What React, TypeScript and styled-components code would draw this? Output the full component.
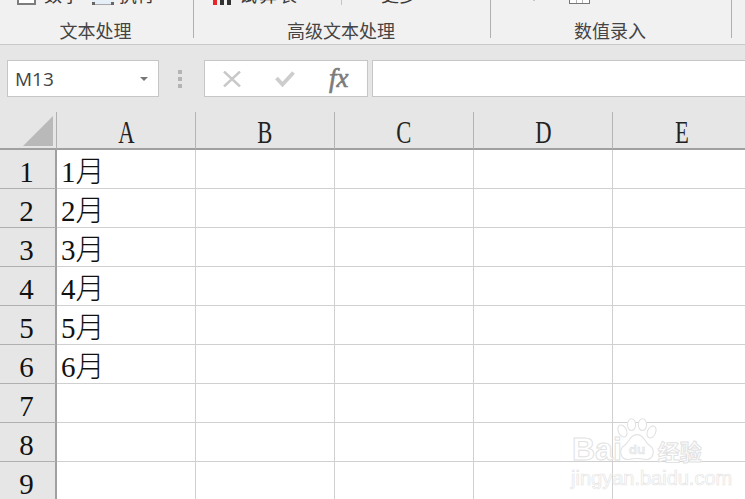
import React from 'react';
import styled, { createGlobalStyle } from 'styled-components';

const UI_FONT = `"Noto Sans CJK SC", "Noto Sans", sans-serif`;
const SHEET_FONT = `"Liberation Serif", "Noto Sans CJK SC", serif`;

const GlobalStyle = createGlobalStyle`
  html, body {
    margin: 0;
    padding: 0;
    background: #ffffff;
    overflow: hidden;
  }
`;

const COLUMNS = ['A', 'B', 'C', 'D', 'E'];
const ROWS = [1, 2, 3, 4, 5, 6, 7, 8, 9];
const MONTHS: Record<number, string> = {
  1: '1月',
  2: '2月',
  3: '3月',
  4: '4月',
  5: '5月',
  6: '6月',
};

const App: React.FC = () => {
  return (
    <Page>
      <GlobalStyle />
      <Ribbon>
        <RibbonGroup $width={194}>
          <TopRow $pad={17}>
            <CheckIcon />
            <TopText $left={8}>数字</TopText>
            <DottedIcon />
            <TopText $left={5}>执行</TopText>
          </TopRow>
          <GroupLabel>文本处理</GroupLabel>
        </RibbonGroup>
        <RibbonGroup $width={297}>
          <TopRow $pad={19}>
            <Bars>
              <Bar $color="#e8262a" />
              <Bar $color="#333333" />
              <Bar $color="#333333" />
            </Bars>
            <TopText $left={8} $spacing={2}>试算表</TopText>
            <ThinRule />
            <TopText $left={39}>更多</TopText>
          </TopRow>
          <GroupLabel>高级文本处理</GroupLabel>
        </RibbonGroup>
        <RibbonGroup $width={241}>
          <TopRow $pad={42}>
            <SmallDot />
            <TableIcon>
              <i />
              <i />
            </TableIcon>
          </TopRow>
          <GroupLabel>数值录入</GroupLabel>
        </RibbonGroup>
      </Ribbon>

      <FormulaBar>
        <NameBox>
          <NameText>M13</NameText>
          <Caret />
        </NameBox>
        <Grip>
          <i />
          <i />
          <i />
        </Grip>
        <FxBox>
          <svg width="18" height="16" viewBox="0 0 18 16">
            <path d="M1 0.5 L17 15.5 M17 0.5 L1 15.5" stroke="#c8c8c8" strokeWidth="2.4" fill="none" />
          </svg>
          <svg width="20" height="17" viewBox="0 0 20 17">
            <path d="M1.5 8 L7.5 14.5 L18.5 2.5" stroke="#cdcdcd" strokeWidth="3.8" fill="none" />
          </svg>
          <FxText>fx</FxText>
        </FxBox>
        <FormulaInput />
      </FormulaBar>

      <Sheet>
        <CornerCell>
          <Triangle />
        </CornerCell>
        {COLUMNS.map((c) => (
          <ColHeader key={c}>
            <ColLetter>{c}</ColLetter>
          </ColHeader>
        ))}
        {ROWS.map((r) => (
          <React.Fragment key={r}>
            <RowHeader>{r}</RowHeader>
            {COLUMNS.map((c) => (
              <Cell key={c}>{c === 'A' ? MONTHS[r] : ''}</Cell>
            ))}
          </React.Fragment>
        ))}
      </Sheet>

      <Watermark>
        <WatermarkTop>
          <BaiText>Bai</BaiText>
          <PawMark width="40" height="46" viewBox="0 0 44 50">
            <g fill="#ffffff" stroke="#e2e2e2" strokeWidth="1.2">
              <ellipse cx="6" cy="14" rx="4.5" ry="7" transform="rotate(-25 6 14)" />
              <ellipse cx="16" cy="7" rx="4.5" ry="6.5" />
              <ellipse cx="28" cy="7" rx="4.5" ry="6.5" />
              <ellipse cx="38" cy="15" rx="4.5" ry="7" transform="rotate(25 38 15)" />
              <path d="M22 18 C14 18 14 26 8 30 C1 35 4 47 14 45 C19 44 25 44 30 45 C40 47 43 35 36 30 C30 26 30 18 22 18 Z" />
            </g>
            <text x="22" y="39" textAnchor="middle" fontFamily="Liberation Sans, sans-serif" fontSize="15" fontWeight="700" fill="#eeeeee" stroke="#dedede" strokeWidth="0.4">
              du
            </text>
          </PawMark>
          <JingText>经验</JingText>
        </WatermarkTop>
        <WatermarkUrl>jingyan.baidu.com</WatermarkUrl>
      </Watermark>
    </Page>
  );
};

export default App;

const Page = styled.div`
  position: relative;
  width: 745px;
  height: 499px;
  overflow: hidden;
  background: #ffffff;
`;

const Ribbon = styled.div`
  display: flex;
  height: 44px;
  background: #f1f1f1;
  border-bottom: 1px solid #c8c8c8;
  overflow: hidden;
`;

const RibbonGroup = styled.div<{ $width: number }>`
  position: relative;
  width: ${(p) => p.$width}px;
  flex: none;
  box-sizing: border-box;

  &::after {
    content: '';
    position: absolute;
    right: 0;
    top: 0;
    width: 1px;
    height: 38px;
    background: #b0b0b0;
  }
`;

const TopRow = styled.div<{ $pad: number }>`
  display: flex;
  align-items: flex-end;
  height: 5px;
  margin-bottom: 12px;
  padding-left: ${(p) => p.$pad}px;
`;

const TopText = styled.span<{ $left: number; $spacing?: number }>`
  flex: none;
  margin-left: ${(p) => p.$left}px;
  font: 18px/18px ${UI_FONT};
  letter-spacing: ${(p) => p.$spacing ?? 0}px;
  color: #3a3a3a;
  transform: translateY(-2px);
`;

const CheckIcon = styled.div`
  flex: none;
  width: 19px;
  height: 14px;
  box-sizing: border-box;
  border: 2px solid #7d7d7d;
  background: #ffffff;
`;

const DottedIcon = styled.div`
  flex: none;
  width: 22px;
  height: 14px;
  margin-left: 12px;
  box-sizing: border-box;
  border-bottom: 1px solid #a8a8a8;
  background: linear-gradient(#f1f1f1, #e4eef8);
  position: relative;

  &::before,
  &::after {
    content: '';
    position: absolute;
    bottom: -1px;
    width: 3px;
    height: 3px;
    background: #666666;
  }
  &::before {
    left: 0;
  }
  &::after {
    right: 0;
  }
`;

const Bars = styled.div`
  display: flex;
  gap: 3px;
  align-items: flex-end;
  height: 7px;
  flex: none;
`;

const Bar = styled.div<{ $color: string }>`
  width: 4px;
  height: 7px;
  background: ${(p) => p.$color};
`;

const ThinRule = styled.div`
  flex: none;
  width: 1px;
  height: 5px;
  margin-left: 42px;
  background: #c4c4c4;
`;

const SmallDot = styled.div`
  flex: none;
  width: 2px;
  height: 2px;
  margin-bottom: 4px;
  background: #c8c8c8;
`;

const TableIcon = styled.div`
  flex: none;
  display: flex;
  justify-content: space-evenly;
  width: 21px;
  height: 8px;
  margin-left: 34px;
  margin-bottom: 1px;
  box-sizing: border-box;
  border: 1px solid #777777;
  border-top: none;
  background: #ffffff;

  i {
    width: 1px;
    background: #b5b5b5;
  }
`;

const GroupLabel = styled.div`
  padding-right: 3px;
  text-align: center;
  font: 18px/26px ${UI_FONT};
  color: #444444;
`;

const FormulaBar = styled.div`
  display: flex;
  align-items: flex-start;
  height: 67px;
  box-sizing: border-box;
  padding: 15px 0 0 7px;
  background: #e6e6e6;
`;

const NameBox = styled.div`
  display: flex;
  align-items: center;
  justify-content: space-between;
  width: 152px;
  height: 37px;
  box-sizing: border-box;
  padding: 0 5px 0 7px;
  background: #ffffff;
  border: 1px solid #c6c6c6;
`;

const NameText = styled.span`
  font: 19px/24px "Open Sans", "Noto Sans", sans-serif;
  color: #444444;
`;

const Caret = styled.div`
  width: 0;
  height: 0;
  border-left: 4px solid transparent;
  border-right: 4px solid transparent;
  border-top: 4px solid #777777;
  margin-right: 5px;
`;

const Grip = styled.div`
  display: flex;
  flex-direction: column;
  gap: 3px;
  width: 45px;
  height: 37px;
  box-sizing: border-box;
  padding: 10px 0 0 19px;

  i {
    width: 4px;
    height: 4px;
    background: #b4b4b4;
  }
`;

const FxBox = styled.div`
  display: flex;
  align-items: center;
  gap: 34px;
  width: 164px;
  height: 37px;
  box-sizing: border-box;
  padding-left: 18px;
  background: #ffffff;
  border: 1px solid #c6c6c6;
`;

const FxText = styled.span`
  font: italic 400 27px/30px "Liberation Serif", serif;
  color: #7c7c7c;
  -webkit-text-stroke: 0.6px #7c7c7c;
  margin-top: -1px;
`;

const FormulaInput = styled.div`
  flex: 1;
  height: 37px;
  margin-left: 4px;
  box-sizing: border-box;
  background: #ffffff;
  border: 1px solid #c6c6c6;
  border-right: none;
`;

const Sheet = styled.div`
  display: grid;
  grid-template-columns: 57px repeat(5, 139px);
  grid-template-rows: 38px repeat(9, 39px);
  background: #e6e6e6;
`;

const CornerCell = styled.div`
  box-sizing: border-box;
  padding: 4px 0 0 23px;
  border-right: 1px solid #b0b0b0;
  border-bottom: 2px solid #a0a0a0;
`;

const Triangle = styled.div`
  width: 30px;
  height: 30px;
  background: #b9b9b9;
  clip-path: polygon(100% 0, 100% 100%, 0 100%);
`;

const ColHeader = styled.div`
  box-sizing: border-box;
  text-align: center;
  font: 29px/40px ${SHEET_FONT};
  color: #222222;
  border-right: 1px solid #b4b4b4;
  border-bottom: 2px solid #a0a0a0;
`;

/* the sheet font in the shot is narrower and taller than Liberation Serif */
const ColLetter = styled.span`
  display: inline-block;
  transform: scale(0.78, 1.12);
`;

const RowHeader = styled.div`
  box-sizing: border-box;
  padding-right: 2px;
  text-align: center;
  font: 29px/44px ${SHEET_FONT};
  color: #111111;
  background: #e6e6e6;
  border-right: 2px solid #a0a0a0;
  border-bottom: 1px solid #b0b0b0;
`;

const Cell = styled.div`
  box-sizing: border-box;
  padding-left: 4px;
  font: 300 29px/44px ${SHEET_FONT};
  color: #111111;
  background: #ffffff;
  border-right: 1px solid #d0d0d0;
  border-bottom: 1px solid #d0d0d0;
  white-space: nowrap;
`;

const Watermark = styled.div`
  position: absolute;
  left: 572px;
  top: 418px;
  width: 136px;
`;

const WatermarkTop = styled.div`
  display: flex;
  align-items: flex-start;
  height: 50px;
`;

const BaiText = styled.span`
  font: 700 32px/26px "Liberation Sans", sans-serif;
  color: #ffffff;
  -webkit-text-stroke: 1px #e2e2e2;
  margin-top: 18px;
`;

const PawMark = styled.svg`
  flex: none;
  margin-left: -5px;
`;

const JingText = styled.span`
  font: 700 22px/24px ${UI_FONT};
  color: #ffffff;
  -webkit-text-stroke: 1px #e2e2e2;
  margin-top: 20px;
  margin-left: 1px;
`;

const WatermarkUrl = styled.div`
  font: 20px/20px "Liberation Sans", sans-serif;
  color: #ffffff;
  -webkit-text-stroke: 0.7px #e6e6e6;
  white-space: nowrap;
  margin-left: -1px;
`;
